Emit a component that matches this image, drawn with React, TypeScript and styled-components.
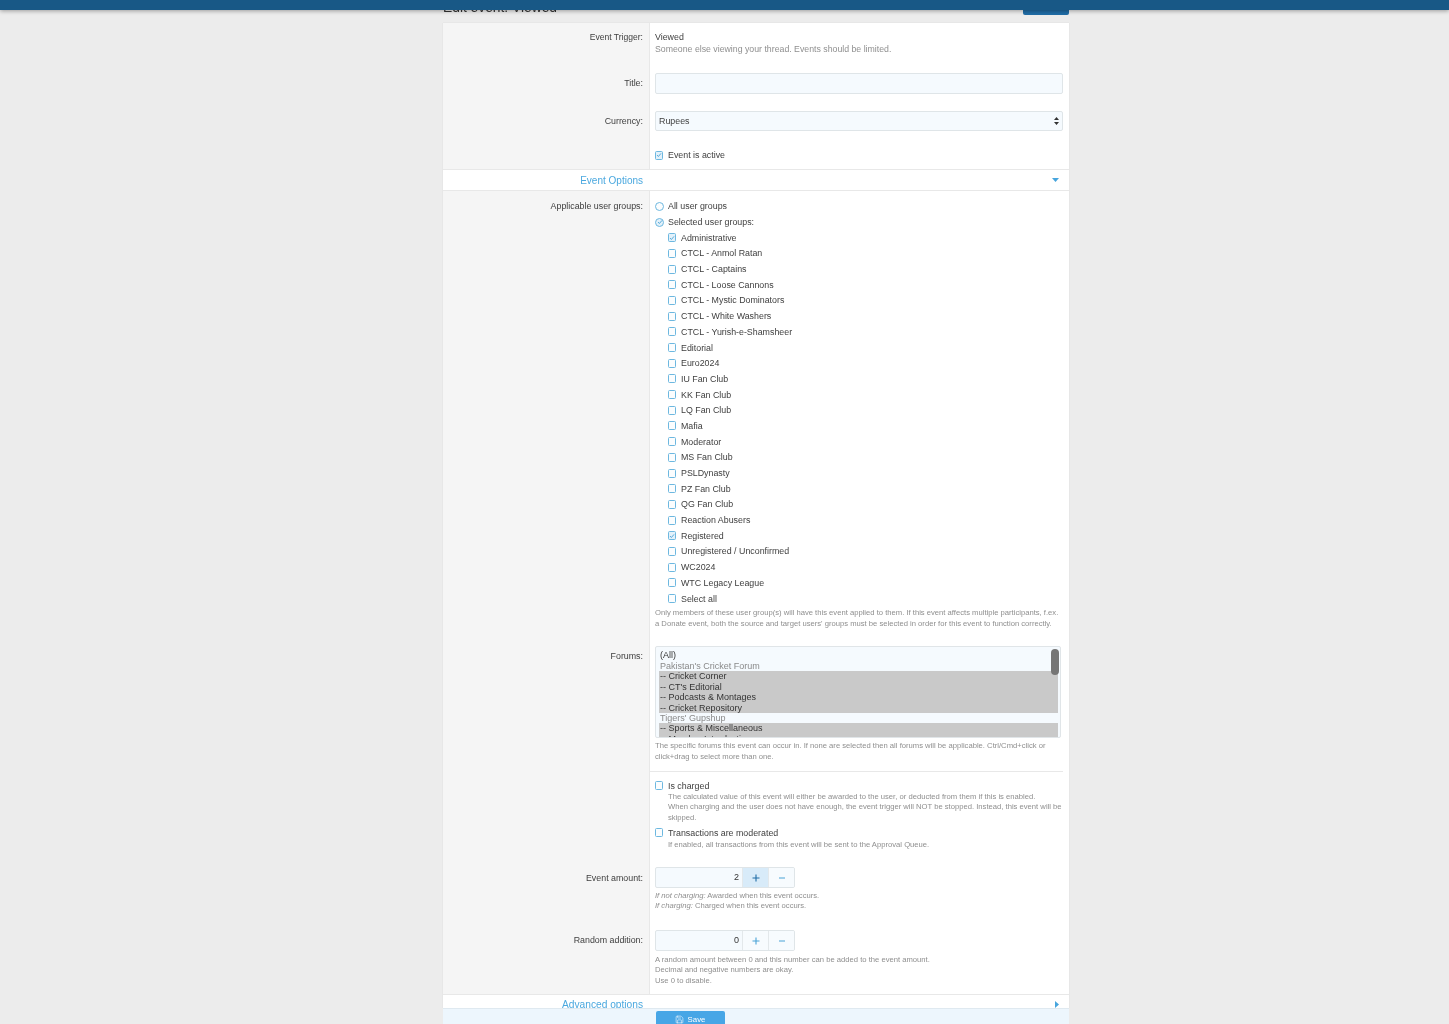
import React from "react";
import styled, { createGlobalStyle } from "styled-components";
import { Save } from "lucide-react";

const Global = createGlobalStyle`
  html, body { margin: 0; padding: 0; height: 1024px; overflow: hidden; background: #ececec; }
  body { font-family: "Liberation Sans", Arial, sans-serif; font-size: 8.85px; color: #404040; }
`;

const Page = styled.div`
  height: 1024px; display: flex; flex-direction: column; overflow: hidden; background: #ececec; filter: blur(0.3px);
`;
const TopBar = styled.header`
  height: 10px; flex: none; background: #185886; box-shadow: 0 1px 4px rgba(0,0,0,.35); position: relative; z-index: 2;
`;
const TitleRow = styled.div`
  width: 626px; height: 13px; flex: none; margin-left: 443px; overflow: hidden; display: flex; justify-content: space-between; align-items: flex-start;
`;
const Title = styled.h1`
  margin: -12px 0 0; font-size: 13.8px; line-height: 20px; font-weight: 400; color: #333;
`;
const TopButton = styled.div`
  width: 46px; height: 5px; background: #1f6ca6; border-radius: 0 0 2px 2px;
`;
const Panel = styled.main`
  width: 626px; height: 985px; flex: none; margin-left: 443px; overflow: hidden; background: #fff; box-shadow: 0 0 1px rgba(0,0,0,.12);
`;
const Row = styled.div`
  display: grid; grid-template-columns: 207px 1fr;
`;
const Label = styled.div<{ $top: number; $size?: number }>`
  background: #f5f5f5; border-right: 1px solid #e8e8e8; padding-top: ${p => p.$top}px; padding-right: 6px;
  text-align: right; line-height: 12px; font-size: ${p => p.$size ?? 8.85}px;
`;
const Value = styled.div<{ $top: number; $bottom: number }>`
  padding: ${p => p.$top}px 6px ${p => p.$bottom}px 5px; line-height: 12px; min-width: 0;
`;
const Hint = styled.div<{ $lh?: number; $mt?: number; $size?: number; $pad?: number }>`
  color: #8f8f8f; font-size: ${p => p.$size ?? 7.65}px; line-height: ${p => p.$lh ?? 10.5}px;
  margin-top: ${p => p.$mt ?? 0}px; padding-left: ${p => p.$pad ?? 0}px; white-space: nowrap;
`;
const TextInput = styled.div`
  height: 21px; box-sizing: border-box; background: #f5fafe; border: 1px solid #dfe5e8; border-radius: 2px;
`;
const SelectBox = styled.div`
  height: 20px; box-sizing: border-box; background: #f5fafe; border: 1px solid #dfe5e8; border-radius: 2px;
  display: flex; align-items: center; justify-content: space-between; padding: 0 3px;
`;
const Section = styled.div<{ $height: number }>`
  display: grid; grid-template-columns: 200px 1fr; height: ${p => p.$height}px; box-sizing: border-box;
  border-top: 1px solid #e8e8e8; border-bottom: 1px solid #e8e8e8; background: #fff; align-items: center;
`;
const SectionTitle = styled.div<{ $size: number }>`
  text-align: right; color: #4aa8df; font-size: ${p => p.$size}px; line-height: 14px; padding-top: 1px;
`;
const Caret = styled.svg`
  justify-self: end; margin-right: 10px; display: block;
`;
const Choice = styled.div<{ $indent?: boolean; $lh?: number; $mt?: number }>`
  display: flex; align-items: center; gap: 5px; height: ${p => p.$lh ?? 15.7}px; padding-left: ${p => p.$indent ? 13 : 0}px;
  margin-top: ${p => p.$mt ?? 0}px; white-space: nowrap;
`;
const BoxMark = styled.span<{ $round?: boolean; $on?: boolean }>`
  width: ${p => p.$round ? 9 : 8}px; height: 9px; flex: none; box-sizing: border-box; border: 1px solid #6db8e0;
  margin-right: ${p => p.$round ? -1 : 0}px; background: ${p => p.$on ? "#e3f1fa" : "#fbfdfe"};
  border-radius: ${p => p.$round ? "50%" : "1.5px"}; display: flex; align-items: center; justify-content: center;
`;
const Listbox = styled.div`
  position: relative; height: 92px; width: 406px; box-sizing: border-box; border: 1px solid #e0e5e8; border-radius: 2px; background: #f5fafe;
  padding: 3px 2px 0 3px; overflow: hidden;
`;
const Option = styled.div<{ $sel?: boolean; $group?: boolean }>`
  height: 10.45px; line-height: 10.45px; font-size: 9px; padding-left: 1px; white-space: nowrap;
  background: ${p => p.$sel ? "#c9c9c9" : "transparent"}; color: ${p => p.$group ? "#8a8a8a" : "#333"};
`;
const Thumb = styled.div`
  position: absolute; top: 2px; right: 1px; width: 8px; height: 26px; background: #757575; border-radius: 4px;
`;
const Divided = styled.div`
  border-bottom: 1px solid #e8e8e8; padding: 0 0 8px 5px; margin-left: -5px;
`;
const Stepper = styled.div`
  display: flex; width: 140px; height: 21px; box-sizing: border-box; border: 1px solid #dfe5e8; border-radius: 2px; background: #f5fafe; overflow: hidden;
`;
const StepValue = styled.div`
  flex: 1; text-align: right; padding-right: 3px; line-height: 19px; color: #333; font-size: 9px;
`;
const StepButton = styled.div<{ $hot?: boolean }>`
  width: 26px; flex: none; box-sizing: border-box; border-left: 1px solid #e3e8eb; background: ${p => p.$hot ? "#d8ebf9" : "#f7fbfe"};
  display: flex; align-items: center; justify-content: center; color: ${p => p.$hot ? "#1f6ca6" : "#4aa3d6"};
`;
const Footer = styled.footer`
  width: 626px; height: 16px; flex: none; margin-left: 443px; background: #edf6fd; border-top: 1px solid #dfe9f0; box-sizing: border-box; overflow: hidden;
  padding: 2px 0 0 213px;
`;
const SaveButton = styled.div`
  width: 69px; height: 22px; background: #47a6e6; border-radius: 2px; color: #fff; font-size: 7.8px; display: flex; justify-content: center; gap: 4px; padding: 4px 1px 0 0; box-sizing: border-box; line-height: 10px;
`;

const Tick = () => (
  <svg width="6" height="6" viewBox="0 0 6 6"><path d="M1 3l1.4 1.5L5 1.4" fill="none" stroke="#4aa3d6" strokeWidth="0.9" /></svg>
);
const Mark = ({ on, round }: { on?: boolean; round?: boolean }) => (
  <BoxMark $on={on} $round={round}>{on && <Tick />}</BoxMark>
);
const Plus = () => (
  <svg width="8" height="8" viewBox="0 0 8 8"><path d="M4 .5v7M.5 4h7" stroke="currentColor" strokeWidth="1.1" /></svg>
);
const Minus = () => (
  <svg width="8" height="8" viewBox="0 0 8 8"><path d="M1 4h6" stroke="currentColor" strokeWidth="1.1" /></svg>
);

const groups: [string, boolean?][] = [
  ["Administrative", true], ["CTCL - Anmol Ratan"], ["CTCL - Captains"], ["CTCL - Loose Cannons"], ["CTCL - Mystic Dominators"],
  ["CTCL - White Washers"], ["CTCL - Yurish-e-Shamsheer"], ["Editorial"], ["Euro2024"], ["IU Fan Club"], ["KK Fan Club"], ["LQ Fan Club"],
  ["Mafia"], ["Moderator"], ["MS Fan Club"], ["PSLDynasty"], ["PZ Fan Club"], ["QG Fan Club"], ["Reaction Abusers"], ["Registered", true],
  ["Unregistered / Unconfirmed"], ["WC2024"], ["WTC Legacy League"], ["Select all"],
];
const forums: [string, "sel" | "group" | "plain"][] = [
  ["(All)", "plain"], ["Pakistan's Cricket Forum", "group"], ["-- Cricket Corner", "sel"], ["-- CT's Editorial", "sel"],
  ["-- Podcasts & Montages", "sel"], ["-- Cricket Repository", "sel"], ["Tigers' Gupshup", "group"],
  ["-- Sports & Miscellaneous", "sel"], ["-- Member Introductions", "sel"],
];

export default function App() {
  return (
    <Page>
      <Global />
      <TopBar />
      <TitleRow>
        <Title>Edit event: Viewed</Title>
        <TopButton />
      </TitleRow>
      <Panel>
        <Row>
          <Label $top={8} $size={8.55}>Event Trigger:</Label>
          <Value $top={8} $bottom={6}>
            Viewed
            <Hint $lh={12} $size={8.75}>Someone else viewing your thread. Events should be limited.</Hint>
          </Value>
        </Row>
        <Row>
          <Label $top={16}>Title:</Label>
          <Value $top={12} $bottom={6}><TextInput /></Value>
        </Row>
        <Row>
          <Label $top={15}>Currency:</Label>
          <Value $top={11} $bottom={6}>
            <SelectBox>
              Rupees
              <svg width="5" height="8" viewBox="0 0 5 8"><path d="M2.5 0L5 3H0zM2.5 8L0 5h5z" fill="#333" /></svg>
            </SelectBox>
          </Value>
        </Row>
        <Row>
          <Label $top={0} />
          <Value $top={12} $bottom={8}>
            <Choice $lh={12}><Mark on />Event is active</Choice>
          </Value>
        </Row>
        <Section $height={22}>
          <SectionTitle $size={10}>Event Options</SectionTitle>
          <Caret width="7" height="4" viewBox="0 0 7 4"><path d="M0 0h7L3.5 4z" fill="#47a5dd" /></Caret>
        </Section>
        <Row>
          <Label $top={9}>Applicable user groups:</Label>
          <Value $top={7.5} $bottom={2}>
            <Choice><Mark round />All user groups</Choice>
            <Choice><Mark round on />Selected user groups:</Choice>
            {groups.map(([name, on]) => (
              <Choice $indent key={name}><Mark on={on} />{name}</Choice>
            ))}
            <Hint $mt={2}>Only members of these user group(s) will have this event applied to them. If this event affects multiple participants, f.ex.</Hint>
            <Hint>a Donate event, both the source and target users' groups must be selected in order for this event to function correctly.</Hint>
          </Value>
        </Row>
        <Row>
          <Label $top={19}>Forums:</Label>
          <Value $top={15} $bottom={0}>
            <Divided>
              <Listbox>
                {forums.map(([name, kind]) => (
                  <Option key={name} $sel={kind === "sel"} $group={kind === "group"}>{name}</Option>
                ))}
                <Thumb />
              </Listbox>
              <Hint $mt={3} $lh={10.6}>The specific forums this event can occur in. If none are selected then all forums will be applicable. Ctrl/Cmd+click or</Hint>
              <Hint $lh={10.6}>click+drag to select more than one.</Hint>
            </Divided>
          </Value>
        </Row>
        <Row>
          <Label $top={0} />
          <Value $top={8} $bottom={5}>
            <Choice $lh={12}><Mark />Is charged</Choice>
            <Hint $pad={13}>The calculated value of this event will either be awarded to the user, or deducted from them if this is enabled.</Hint>
            <Hint $pad={13}>When charging and the user does not have enough, the event trigger will NOT be stopped. Instead, this event will be</Hint>
            <Hint $pad={13}>skipped.</Hint>
            <Choice $lh={12} $mt={3.5}><Mark />Transactions are moderated</Choice>
            <Hint $pad={13} $mt={1}>If enabled, all transactions from this event will be sent to the Approval Queue.</Hint>
          </Value>
        </Row>
        <Row>
          <Label $top={16.5}>Event amount:</Label>
          <Value $top={12} $bottom={6}>
            <Stepper>
              <StepValue>2</StepValue>
              <StepButton $hot><Plus /></StepButton>
              <StepButton><Minus /></StepButton>
            </Stepper>
            <Hint $mt={2.6} $lh={10.8}><i>If not charging:</i> Awarded when this event occurs.</Hint>
            <Hint $lh={10.8}><i>If charging:</i> Charged when this event occurs.</Hint>
          </Value>
        </Row>
        <Row>
          <Label $top={16}>Random addition:</Label>
          <Value $top={12} $bottom={7.7}>
            <Stepper>
              <StepValue>0</StepValue>
              <StepButton><Plus /></StepButton>
              <StepButton><Minus /></StepButton>
            </Stepper>
            <Hint $mt={3.7}>A random amount between 0 and this number can be added to the event amount.</Hint>
            <Hint>Decimal and negative numbers are okay.</Hint>
            <Hint>Use 0 to disable.</Hint>
          </Value>
        </Row>
        <Section $height={21}>
          <SectionTitle $size={10.2}>Advanced options</SectionTitle>
          <Caret width="4" height="7" viewBox="0 0 4 7"><path d="M0 0l4 3.5L0 7z" fill="#47a5dd" /></Caret>
        </Section>
      </Panel>
      <Footer>
        <SaveButton><Save size={9} strokeWidth={1.5} />Save</SaveButton>
      </Footer>
    </Page>
  );
}
